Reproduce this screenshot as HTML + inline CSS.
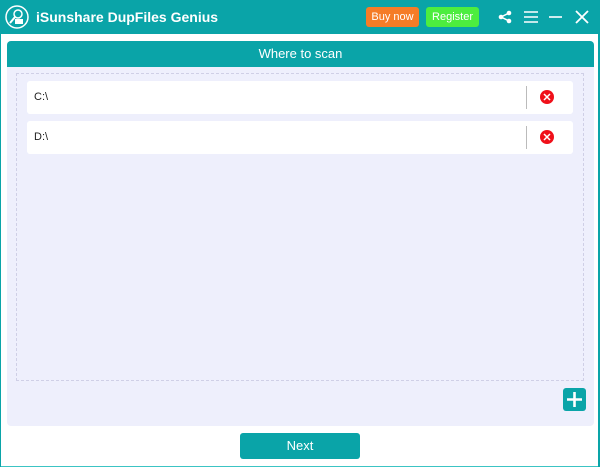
<!DOCTYPE html>
<html><head><style>
*{margin:0;padding:0;box-sizing:border-box}
body{width:600px;height:467px;position:relative;background:#fff;font-family:"Liberation Sans","DejaVu Sans",sans-serif;overflow:hidden}
.tb{position:absolute;left:0;top:0;width:600px;height:34px;background:#0aa4a8}
.title{position:absolute;left:36px;top:9px;color:#fff;font-size:14px;font-weight:bold}
.btn{position:absolute;top:7px;height:20px;border-radius:3px;color:#fff;font-size:11px;text-align:center;line-height:20px}
.panel{position:absolute;left:7px;top:41px;width:587px;height:385px;background:#eeeffc;border-radius:4px;overflow:hidden}
.ph{height:26px;background:#0aa4a8;color:#fff;font-size:13px;text-align:center;line-height:26px}
.dash{position:absolute;left:9px;top:32px;width:568px;height:308px;border:1px dashed #cfcfe6}
.row{position:absolute;left:20px;width:546px;height:33px;background:#fff;border-radius:3px;font-size:11px;line-height:33px;padding-left:7px;color:#222}
.row .d{position:absolute;left:499px;top:5px;width:1px;height:23px;background:#bbb}
.row .x{position:absolute;left:513px;top:9px;width:14px;height:14px;border-radius:50%;background:#f0101a}
.plus{position:absolute;left:556px;top:347px;width:23px;height:23px;border-radius:3px;background:#0aa4a8}
.next{position:absolute;left:240px;top:433px;width:120px;height:26px;background:#0aa4a8;border-radius:3px;color:#fff;font-size:13px;text-align:center;line-height:26px}
</style></head><body>
<div class="tb">
<svg style="position:absolute;left:5px;top:5px" width="24" height="24" viewBox="0 0 24 24"><circle cx="12" cy="12" r="11" fill="none" stroke="#fff" stroke-width="1.5"/><circle cx="13" cy="9" r="4" fill="none" stroke="#fff" stroke-width="1.5"/><path d="M10 12 L5 18" stroke="#fff" stroke-width="2"/><rect x="10" y="14" width="8" height="5" fill="#fff"/></svg>
<div class="title">iSunshare DupFiles Genius</div>
<div class="btn" style="left:366px;width:53px;background:#f57c27">Buy now</div>
<div class="btn" style="left:426px;width:53px;background:#4ded3f">Register</div>
<svg style="position:absolute;left:498px;top:10px" width="14" height="14" viewBox="0 0 14 14"><circle cx="11" cy="3" r="2.3" fill="#fff"/><circle cx="3" cy="7" r="2.3" fill="#fff"/><circle cx="11" cy="11" r="2.3" fill="#fff"/><path d="M11 3L3 7L11 11" stroke="#fff" stroke-width="1.5" fill="none"/></svg>
<svg style="position:absolute;left:524px;top:10px" width="14" height="14" viewBox="0 0 14 14"><path d="M0 2H14M0 7H14M0 12H14" stroke="#fff" stroke-width="1.6"/></svg>
<svg style="position:absolute;left:549px;top:10px" width="14" height="14" viewBox="0 0 14 14"><path d="M0 7H13" stroke="#fff" stroke-width="1.6"/></svg>
<svg style="position:absolute;left:575px;top:10px" width="14" height="14" viewBox="0 0 14 14"><path d="M1 1L13 13M13 1L1 13" stroke="#fff" stroke-width="1.8"/></svg>
</div>
<div class="panel">
<div class="ph">Where to scan</div>
<div class="dash"></div>
<div class="row" style="top:40px">C:\<div class="d"></div><svg class="x" viewBox="0 0 14 14"><path d="M4 4L10 10M10 4L4 10" stroke="#fff" stroke-width="1.5"/></svg></div>
<div class="row" style="top:80px">D:\<div class="d"></div><svg class="x" viewBox="0 0 14 14"><path d="M4 4L10 10M10 4L4 10" stroke="#fff" stroke-width="1.5"/></svg></div>
<svg class="plus" viewBox="0 0 23 23"><path d="M11.5 4V19M4 11.5H19" stroke="#fff" stroke-width="2.6"/></svg>
</div>
<div class="next">Next</div>
<div style="position:absolute;left:0;top:466px;width:600px;height:1px;background:#3cc4c4"></div>
<div style="position:absolute;left:598px;top:34px;width:2px;height:433px;background:#0aa4a8"></div>
<div style="position:absolute;left:0;top:34px;width:1px;height:433px;background:#0aa4a8"></div>
</body></html>
